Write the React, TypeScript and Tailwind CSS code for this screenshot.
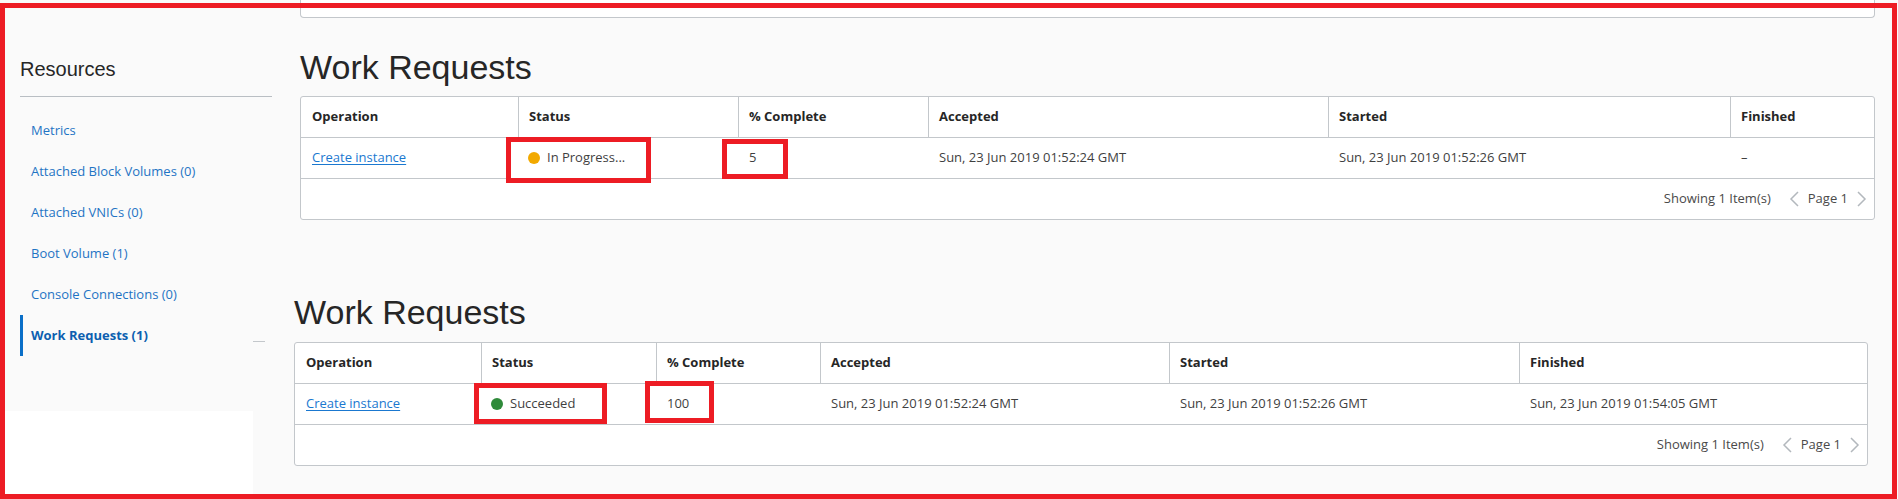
import { ReactNode } from "react";

interface WorkRequest {
  operation: string;
  status: "progress" | "done";
  statusLabel: string;
  percent: string;
  accepted: string;
  started: string;
  finished: string;
}

const headers = ["Operation", "Status", "% Complete", "Accepted", "Started", "Finished"];

const navLinks = [
  "Metrics",
  "Attached Block Volumes (0)",
  "Attached VNICs (0)",
  "Boot Volume (1)",
  "Console Connections (0)",
];

const pending: WorkRequest = {
  operation: "Create instance",
  status: "progress",
  statusLabel: "In Progress...",
  percent: "5",
  accepted: "Sun, 23 Jun 2019 01:52:24 GMT",
  started: "Sun, 23 Jun 2019 01:52:26 GMT",
  finished: "–",
};

const completed: WorkRequest = {
  operation: "Create instance",
  status: "done",
  statusLabel: "Succeeded",
  percent: "100",
  accepted: "Sun, 23 Jun 2019 01:52:24 GMT",
  started: "Sun, 23 Jun 2019 01:52:26 GMT",
  finished: "Sun, 23 Jun 2019 01:54:05 GMT",
};

const Chevron = ({ dir }: { dir: "left" | "right" }) => (
  <svg width="11" height="16" viewBox="0 0 11 16" fill="none">
    <polyline
      points={dir === "left" ? "9,1 2,8 9,15" : "2,1 9,8 2,15"}
      stroke="#b3b8bd"
      strokeWidth="1.5"
    />
  </svg>
);

const Highlight = ({ className }: { className: string }) => (
  <div className={`absolute border-[5px] border-[#ed1c24] pointer-events-none ${className}`} />
);

interface TableProps {
  row: WorkRequest;
  gridCols: string;
  width: string;
  children?: ReactNode;
}

const WorkRequestTable = ({ row, gridCols, width, children }: TableProps) => (
  <div
    className={`relative ${width} bg-white border border-[#c3c7cb] rounded-[3px] font-['Open_Sans',sans-serif] text-[13px] text-[#3f3f3f]`}
  >
    {/* Header */}
    <div className={`grid ${gridCols} h-[41px] border-b border-[#c3c7cb]`}>
      {headers.map((h, i) => (
        <div
          key={h}
          className={`flex items-center px-[10px] font-bold text-[#262626] ${
            i > 0 ? "border-l border-[#c3c7cb]" : "pl-[11px]"
          }`}
        >
          {h}
        </div>
      ))}
    </div>

    {/* Row */}
    <div className={`grid ${gridCols} h-[41px] border-b border-[#c3c7cb]`}>
      <div className="flex items-center pl-[11px]">
        <a href="#" className="text-[#1a78d0] underline underline-offset-2">
          {row.operation}
        </a>
      </div>
      <div className="flex items-center pl-[10px] gap-[7px]">
        <span
          className={`w-[12px] h-[12px] rounded-full ${
            row.status === "progress" ? "bg-[#f2a900]" : "bg-[#2f8a3a]"
          }`}
        />
        <span>{row.statusLabel}</span>
      </div>
      <div className="flex items-center pl-[11px]">{row.percent}</div>
      <div className="flex items-center pl-[11px]">{row.accepted}</div>
      <div className="flex items-center pl-[11px]">{row.started}</div>
      <div className="flex items-center pl-[11px]">{row.finished}</div>
    </div>

    {/* Footer */}
    <div className="flex items-center justify-end h-[40px] pr-[7px] text-[#4a4a4a]">
      <span>Showing 1 Item(s)</span>
      <span className="ml-[18px]">
        <Chevron dir="left" />
      </span>
      <span className="ml-[8px]">Page 1</span>
      <span className="ml-[8px]">
        <Chevron dir="right" />
      </span>
    </div>

    {children}
  </div>
);

const Sidebar = () => (
  <aside className="w-[280px] shrink-0 flex flex-col">
    <div className="pl-[20px] pt-[57px]">
      <h2 className="font-['Liberation_Sans',Arial,sans-serif] text-[20px] leading-[24px] text-[#262626]">
        Resources
      </h2>
      <div className="mt-[15px] w-[252px] h-px bg-[#b9bec3]" />

      <nav className="pt-[13px] w-[245px] font-['Open_Sans',sans-serif] text-[13px]">
        {navLinks.map((link) => (
          <div key={link} className="h-[41px] flex items-center pl-[11px] text-[#1f74c4]">
            {link}
          </div>
        ))}
        <div className="h-[41px] flex items-center border-l-[3px] border-[#0a6fc8] pl-[8px] font-bold text-[#0d5fb0]">
          Work Requests (1)
          <span className="ml-auto mt-[12px] w-[12px] h-px bg-[#c3c7cb]" />
        </div>
      </nav>
    </div>

    <div className="mt-[55px] w-[253px] h-[88px] bg-white" />
  </aside>
);

export default function App() {
  return (
    <div className="relative w-[1898px] h-[499px] overflow-hidden bg-[#fafafa] flex">
      <Sidebar />

      <main className="flex-1 flex flex-col">
        {/* Earlier instance panel, only its lower edge is in view */}
        <div className="ml-[20px] w-[1575px] h-[18px] bg-white border-x border-b border-[#c3c7cb] rounded-b-[4px]" />

        <section className="ml-[20px]">
          <h1 className="mt-[29px] font-['Liberation_Sans',Arial,sans-serif] text-[34px] leading-[40px] text-[#262626]">
            Work Requests
          </h1>
          <div className="mt-[9px]">
            <WorkRequestTable
              row={pending}
              width="w-[1575px]"
              gridCols="grid-cols-[217px_220px_190px_400px_402px_144px]"
            >
              <Highlight className="left-[205px] top-[40px] w-[145px] h-[46px]" />
              <Highlight className="left-[421px] top-[42px] w-[66px] h-[40px]" />
            </WorkRequestTable>
          </div>
        </section>

        <section className="ml-[14px]">
          <h1 className="mt-[72px] font-['Liberation_Sans',Arial,sans-serif] text-[34px] leading-[40px] text-[#262626]">
            Work Requests
          </h1>
          <div className="mt-[10px]">
            <WorkRequestTable
              row={completed}
              width="w-[1574px]"
              gridCols="grid-cols-[186px_175px_164px_349px_350px_348px]"
            >
              <Highlight className="left-[179px] top-[40px] w-[133px] h-[41px]" />
              <Highlight className="left-[350px] top-[38px] w-[69px] h-[42px]" />
            </WorkRequestTable>
          </div>
        </section>
      </main>

      {/* Outline drawn round the whole view */}
      <div className="absolute left-0 top-[3px] w-[1897px] h-[496px] border-[5px] border-[#ed1c24] pointer-events-none" />
    </div>
  );
}
